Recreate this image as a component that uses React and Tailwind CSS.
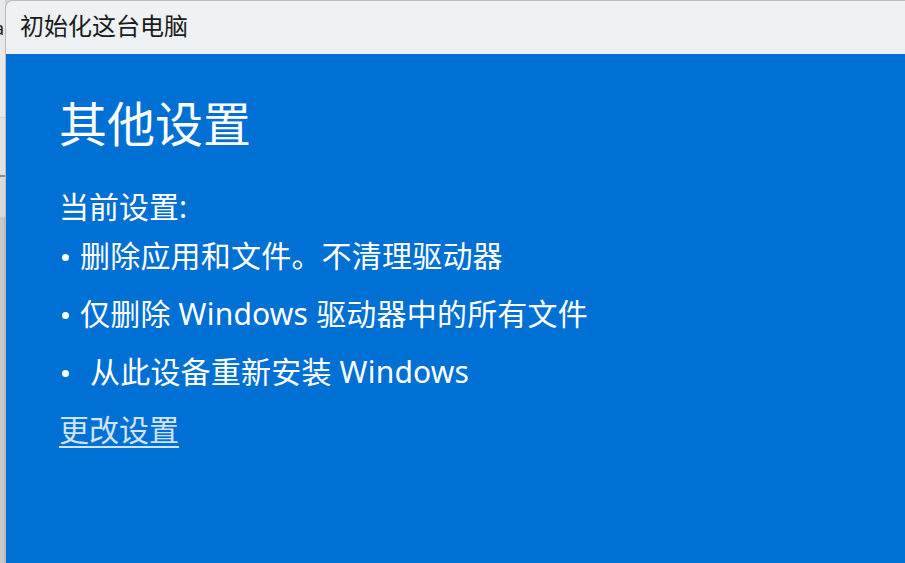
import React from "react";

const bullets = [
  { text: "删除应用和文件。不清理驱动器", extra: false },
  { text: "仅删除 Windows 驱动器中的所有文件", extra: false },
  { text: "从此设备重新安装 Windows", extra: true },
];

const App = () => {
  return (
    <div
      className="flex w-[905px] h-[563px] overflow-hidden bg-[#d4d4d4]"
      style={{ fontFamily: '"Noto Sans", "Noto Sans CJK SC", sans-serif' }}
    >
      {/* desktop behind the window */}
      <div className="flex flex-col w-[5px] shrink-0 overflow-hidden">
        <div className="h-[118px] bg-[#e9e9e9] border-b border-[#d2d2d2] pt-[16px]">
          <span className="block -ml-[6px] text-[18px] leading-[24px] text-[#222]">a</span>
        </div>
        <div className="h-[59px] bg-[#e2e2e2] border-b-2 border-[#8a8a8a]"></div>
        <div className="h-[40px] bg-[#d9d9d9]"></div>
        <div className="flex-1 bg-[#c9c9c9] border-r border-[#b4b4b4]"></div>
      </div>

      {/* window */}
      <div className="flex flex-col flex-1 rounded-tl-[8px] overflow-hidden border-l border-t border-[#bdbdbd]">
        <div className="h-[53px] shrink-0 bg-[#eef2f5] flex items-center pl-[14px]">
          <span className="text-[24px] text-[#1b1b1b] leading-none pb-[4px]">初始化这台电脑</span>
        </div>

        <div className="flex-1 bg-[#0170d4] text-white pl-[53px] pt-[42px]">
          <h1 className="text-[48px] leading-[56px] font-normal">其他设置</h1>
          <p className="mt-[35px] text-[30px] leading-[40px]">当前设置:</p>
          <ul>
            {bullets.map((b) => (
              <li key={b.text} className="flex items-center text-[30px] leading-[58px]">
                <span className={b.extra ? "flex shrink-0 w-[31px] pl-[3px]" : "flex shrink-0 w-[21px] pl-[3px]"}>
                  <span className="block shrink-0 w-[7px] h-[7px] rounded-full bg-white mt-[3px]"></span>
                </span>
                <span className="tracking-[0.2px]">{b.text}</span>
              </li>
            ))}
          </ul>
          <a
            href="#"
            className="text-[30px] leading-[58px] text-[#cfe4f7] underline decoration-[2px] underline-offset-[5px]"
          >
            更改设置
          </a>
        </div>
      </div>
    </div>
  );
};

export default App;
